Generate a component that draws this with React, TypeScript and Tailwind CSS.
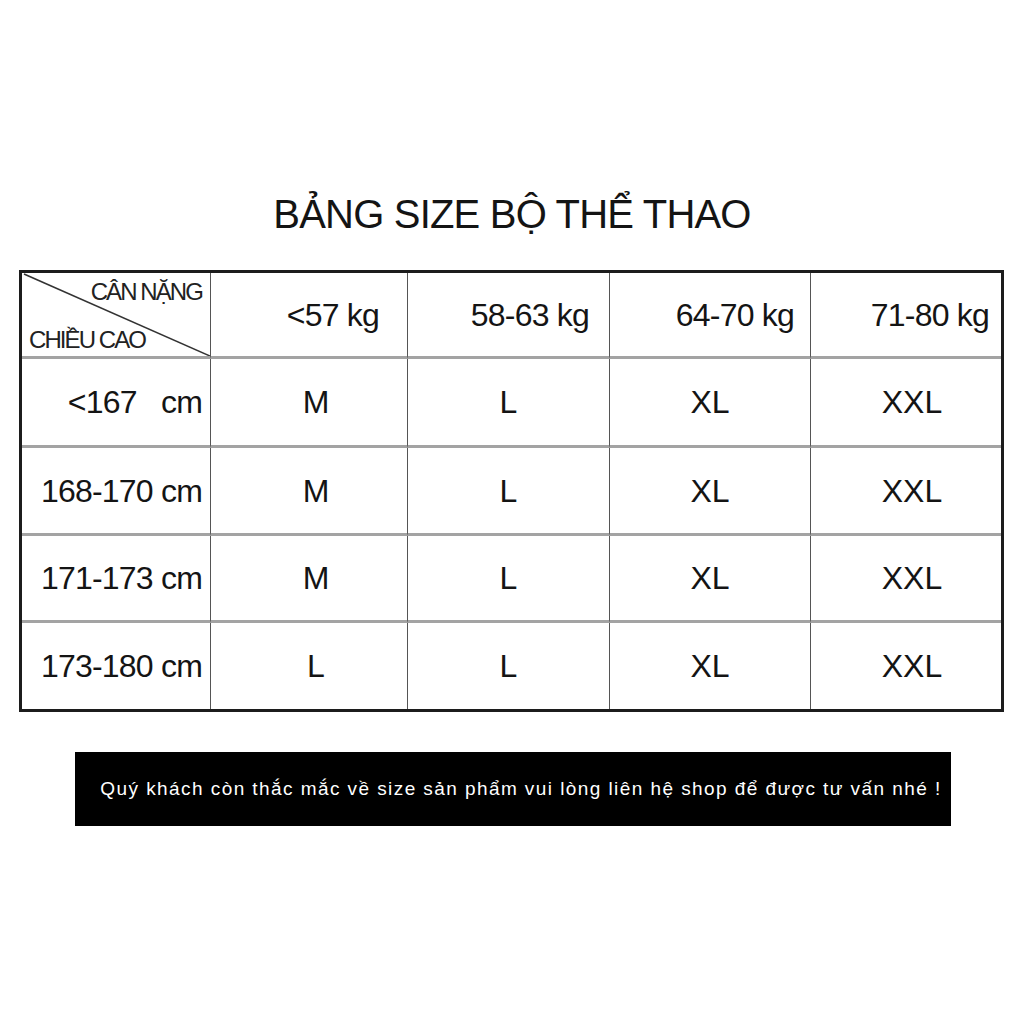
import React from 'react';

const weights = ['<57 kg', '58-63 kg', '64-70 kg', '71-80 kg'];

const rows = [
  { height: '<167   cm', sizes: ['M', 'L', 'XL', 'XXL'] },
  { height: '168-170 cm', sizes: ['M', 'L', 'XL', 'XXL'] },
  { height: '171-173 cm', sizes: ['M', 'L', 'XL', 'XXL'] },
  { height: '173-180 cm', sizes: ['L', 'L', 'XL', 'XXL'] },
];

const font = { fontFamily: '"Liberation Sans", Arial, sans-serif' };

export default function App() {
  return (
    <div className="w-[1024px] h-[1024px] bg-white text-[#141414] pt-[191px]" style={font}>
      {/* Title */}
      <h1 className="text-center text-[40px] leading-[46px] tracking-[-0.02em] font-normal">
        BẢNG SIZE BỘ THỂ THAO
      </h1>

      {/* Size table */}
      <div className="ml-[19px] mt-[33px] w-[985px] border-[3px] border-[#1c1c1c] grid grid-cols-[189px_197px_202px_201px_190px] grid-rows-[86px_89px_88px_87px_86px]">
        {/* Diagonal header cell */}
        <div className="relative border-r border-b-[3px] border-r-[#555] border-b-[#a3a3a3]">
          <svg className="absolute inset-0 w-full h-full" viewBox="0 0 189 86" preserveAspectRatio="none">
            <line x1="2" y1="1" x2="189" y2="86" stroke="#333" strokeWidth="1.6" />
          </svg>
          <span className="absolute right-[8px] top-[7px] text-[24px] leading-none tracking-[-0.08em] text-[#222]">
            CÂN NẶNG
          </span>
          <span className="absolute left-[7px] bottom-[4px] text-[24px] leading-none tracking-[-0.08em] text-[#222]">
            CHIỀU CAO
          </span>
        </div>
        {weights.map((w, i) => (
          <div
            key={w}
            className={`flex items-center justify-end border-b-[3px] border-b-[#a3a3a3] text-[32px] tracking-tight ${
              i < 3 ? 'border-r border-r-[#555]' : ''
            } ${i === 0 ? 'pr-[28px]' : i === 1 ? 'pr-[20px]' : i === 2 ? 'pr-[16px]' : 'pr-[12px]'}`}
          >
            {w}
          </div>
        ))}

        {rows.map((r, ri) => (
          <React.Fragment key={r.height}>
            <div
              className={`flex items-center justify-end pr-[8px] text-[32px] tracking-tight whitespace-pre border-r border-r-[#555] ${
                ri < 3 ? 'border-b-[3px] border-b-[#a3a3a3]' : ''
              }`}
            >
              {r.height}
            </div>
            {r.sizes.map((s, i) => (
              <div
                key={i}
                className={`flex items-center justify-center text-[32px] ${
                  i < 3 ? 'border-r border-r-[#555]' : ''
                } ${ri < 3 ? 'border-b-[3px] border-b-[#a3a3a3]' : ''} ${
                  i === 0 ? 'pl-[14px]' : i === 3 ? 'pl-[12px]' : ''
                }`}
              >
                {s}
              </div>
            ))}
          </React.Fragment>
        ))}
      </div>

      {/* Contact banner */}
      <div className="ml-[75px] mt-[40px] w-[876px] h-[74px] bg-black flex items-center justify-center pl-[16px]">
        <span className="text-white text-[19px] tracking-[0.075em]">
          Quý khách còn thắc mắc về size sản phẩm vui lòng liên hệ shop để được tư vấn nhé !
        </span>
      </div>
    </div>
  );
}
